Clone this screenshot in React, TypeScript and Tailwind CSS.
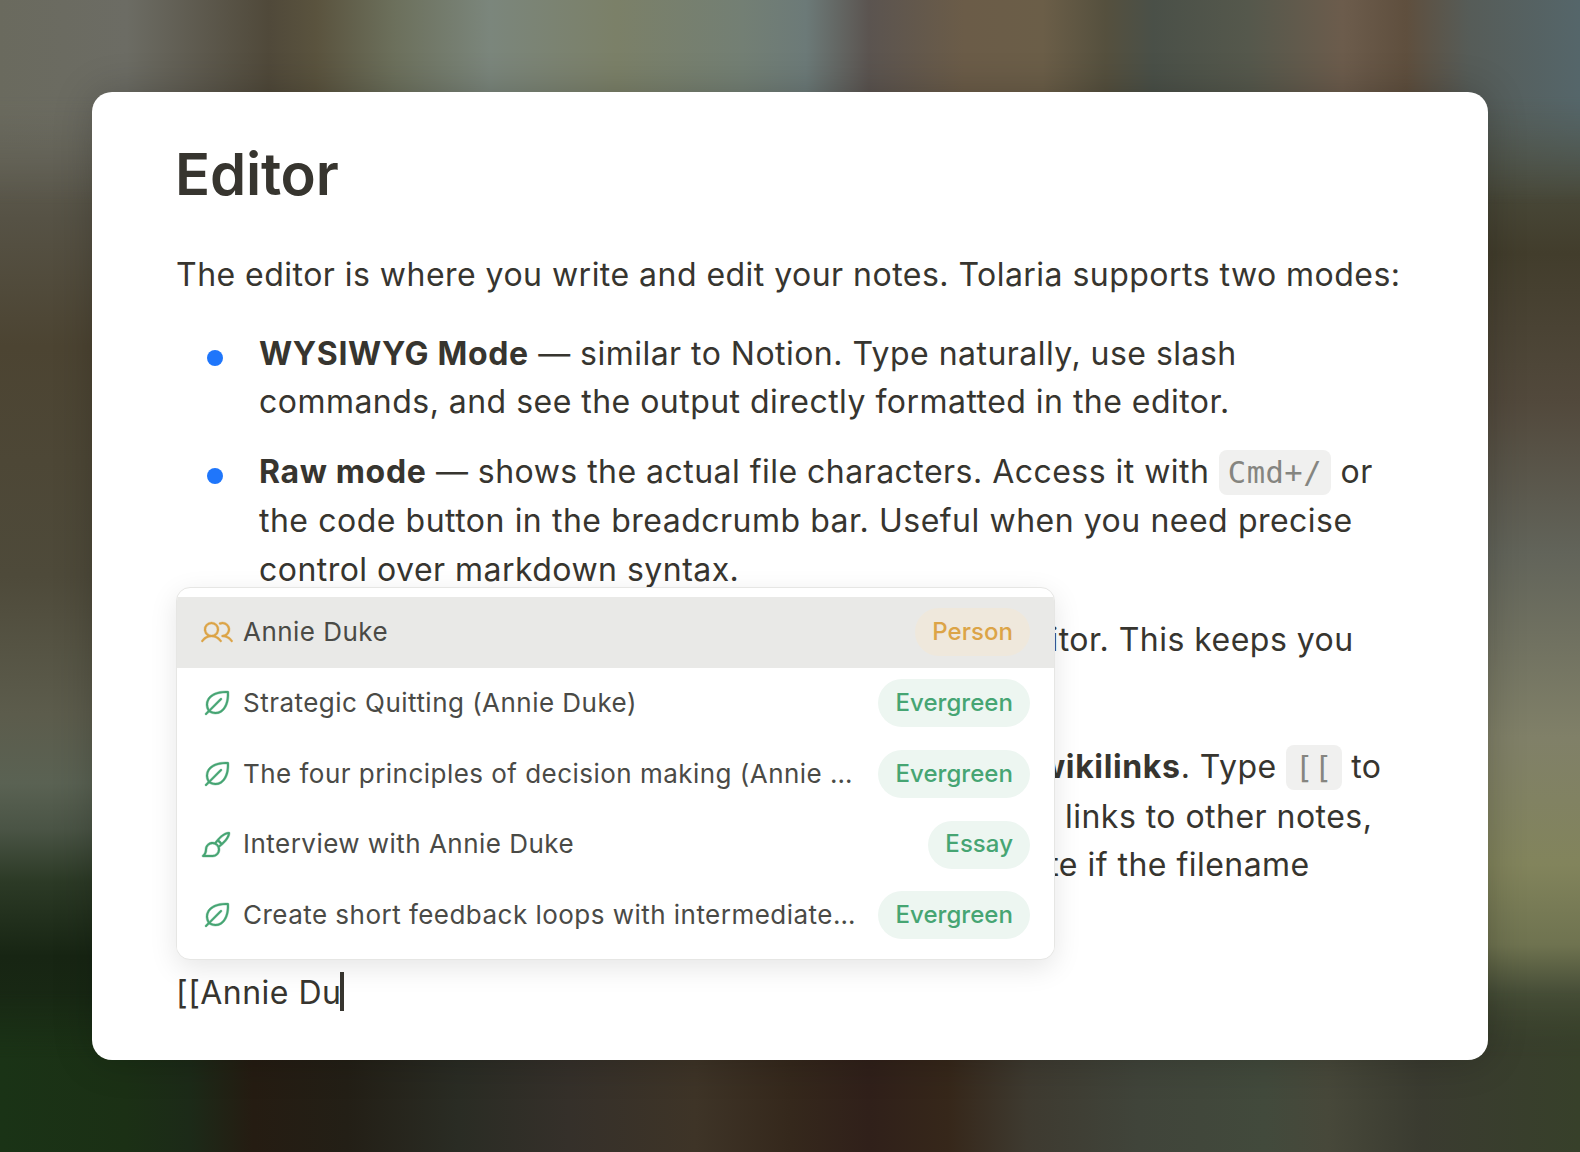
import React from "react";
import { PiUsers, PiLeaf, PiPaintBrush } from "react-icons/pi";

type Row = { icon: "users" | "leaf" | "brush"; title: string; badge: string; active?: boolean };

const rows: Row[] = [
  { icon: "users", title: "Annie Duke", badge: "Person", active: true },
  { icon: "leaf", title: "Strategic Quitting (Annie Duke)", badge: "Evergreen" },
  { icon: "leaf", title: "The four principles of decision making (Annie Duke)", badge: "Evergreen" },
  { icon: "brush", title: "Interview with Annie Duke", badge: "Essay" },
  { icon: "leaf", title: "Create short feedback loops with intermediate goals", badge: "Evergreen" },
];

function Code({ children }: { children: React.ReactNode }) {
  return (
    <code className="rounded-[8px] bg-[#f0f0ef] px-[9px] py-[5px] font-['DejaVu_Sans_Mono',monospace] text-[30.5px] leading-[49.5px] text-[#858580]">
      {children}
    </code>
  );
}

function Strong({ children }: { children: React.ReactNode }) {
  return <strong className="font-bold tracking-[0.64px]">{children}</strong>;
}

function Bullet({ children, className = "mb-[21px]" }: { children: React.ReactNode; className?: string }) {
  return (
    <li className={`relative pl-[83px] ${className}`}>
      <span className="absolute left-[31px] top-[20px] h-4 w-4 rounded-full bg-[#1f76fb]" />
      {children}
    </li>
  );
}

function ResultRow({ row }: { row: Row }) {
  const Icon = row.icon === "users" ? PiUsers : row.icon === "leaf" ? PiLeaf : PiPaintBrush;
  const person = row.icon === "users";
  return (
    <div className={`flex h-[70.75px] items-center pl-6 pr-6 ${row.active ? "bg-[#e9e9e7]" : "bg-white"}`}>
      <Icon
        stroke="currentColor"
        strokeWidth={3}
        className={`h-8 w-8 shrink-0 ${person ? "text-[#dca447]" : "text-[#46a573]"}`}
      />
      <span className="ml-[10px] min-w-0 flex-1 truncate text-[26px] tracking-[0.47px] text-[#4a4a46]">{row.title}</span>
      <span
        className={`ml-[22px] flex h-[48px] shrink-0 items-center rounded-full px-[17px] text-[24px] font-medium tracking-[0.05px] ${
          person ? "bg-[#efe8dc] text-[#dca447]" : "bg-[#edf6f1] text-[#46a573]"
        }`}
      >
        {row.badge}
      </span>
    </div>
  );
}

export default function App() {
  return (
    <div className="relative h-[1152px] overflow-hidden bg-[#3a3a30] font-['Inter',sans-serif]">
      <div className="absolute inset-0 bg-[linear-gradient(to_bottom,#66665a_0%,#6a6a60_6%,#565245_19%,#4c4432_30%,#4e4a3a_50%,#5c5c4c_62%,#5a6253_68%,#4a5445_72%,#2c3a26_76.5%,#172513_83%,#1c3217_100%)]" />
      <div className="absolute inset-0 bg-[linear-gradient(to_bottom,#55666a_0%,#4c4f40_12.7%,#423d2c_22%,#52493c_35%,#62645a_48%,#808068_64%,#82845c_75%,#6f7350_82%,#484f38_86%,#333c27_92.5%,#36402a_100%)] [mask-image:linear-gradient(to_right,transparent_50%,black_95%)]" />
      <div className="absolute inset-x-0 top-0 h-[240px] bg-[linear-gradient(to_right,#6a6a5e_0%,#6c6c64_8%,#50493a_17%,#5a533e_20%,#6c705c_25%,#7b867c_31%,#7b8068_39%,#737f74_47%,#6c7a78_51%,#5b5450_55%,#6b5c48_61%,#6b5e48_66%,#55503e_70%,#4a5048_73%,#55584c_79%,#6c5c4c_85%,#5f4f3e_89%,#565c58_93%,#55666a_100%)] [mask-image:linear-gradient(to_bottom,black_40%,transparent_85%)]" />
      <div className="absolute inset-x-0 bottom-0 h-[170px] bg-[linear-gradient(to_right,#1a3316_0%,#1b3015_8%,#1c2a18_12%,#251c12_16%,#231f16_22%,#2a2c24_29%,#35302a_36%,#3e3427_44%,#35281c_50%,#30201a_55%,#36271a_60%,#3e3a30_65%,#40443a_72%,#424a3c_80%,#47483a_84%,#3a3b30_90%,#37402a_100%)] [mask-image:linear-gradient(to_top,black_55%,transparent_95%)]" />

      <div className="relative px-[92px] pt-[92px]">
        <div className="relative h-[968px] rounded-[20px] bg-white pl-[84px] pr-[84px] pt-[42px] text-[32px] leading-[48.5px] tracking-[0.47px] text-[#37352f] shadow-[0_0_40px_rgba(0,0,0,0.2)]">
          <h1 className="ml-[-1px] text-[58px] font-semibold leading-[80px] tracking-[-0.2px]">Editor</h1>
          <p className="mt-[37px]">The editor is where you write and edit your notes. Tolaria supports two modes:</p>
          <ul className="mt-[30px]">
            <Bullet>
              <Strong>WYSIWYG Mode</Strong> — similar to Notion. Type naturally, use slash
              <br />
              commands, and see the output directly formatted in the editor.
            </Bullet>
            <Bullet className="mb-[22px]">
              <Strong>Raw mode</Strong> — shows the actual file characters. Access it with <Code>Cmd+/</Code> or
              <br />
              <span className="[word-spacing:0.3px]">the code button in the breadcrumb bar. Useful when you need precise</span>
              <br />
              control over markdown syntax.
            </Bullet>
            <Bullet className="mb-[30px]">
              <Strong>Focus mode</Strong> — dims everything else except the editor. This keeps you
              <br />
              focused on what you are writing.
            </Bullet>
            <Bullet>
              <span className="[word-spacing:-0.7px]">Your notes connect to each other directly through</span>{" "}
              <Strong>wikilinks</Strong>. Type <Code>[[</Code> to
              <br />
              <span className="[word-spacing:-1.9px]">open up the autocomplete menu, then quickly insert</span> links to
              other notes,
              <br />
              <span className="[word-spacing:-3.4px]">which your own Tolaria vault will automatically</span> update if the
              filename
              <br />
              changes.
            </Bullet>
          </ul>
          <p className="mt-[27px]">
            [[Annie Du
            <span className="ml-[-1px] inline-block h-[39px] w-[4px] translate-y-[7px] bg-[#37352f]" />
          </p>

          <div className="absolute left-[84px] top-[495px] h-[373px] w-[879px] overflow-hidden rounded-[14px] border border-[#e6e6e4] bg-white pt-[9px] shadow-[0_8px_28px_rgba(0,0,0,0.1)]">
            {rows.map((row) => (
              <ResultRow key={row.title} row={row} />
            ))}
          </div>
        </div>
      </div>
    </div>
  );
}
